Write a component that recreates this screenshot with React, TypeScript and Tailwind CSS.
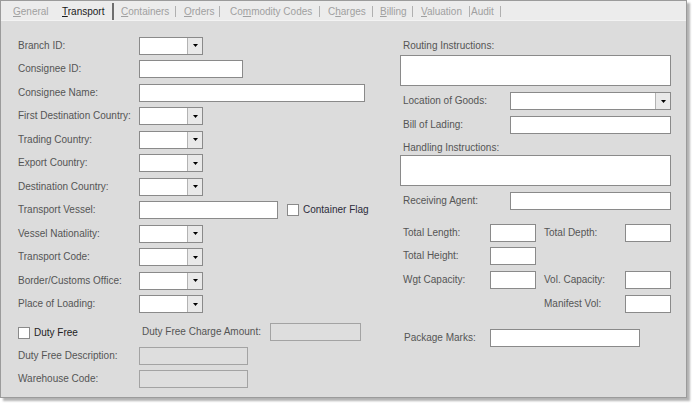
import React from "react";

function Box({ className = "", disabled = false }: { className?: string; disabled?: boolean }) {
  return (
    <div
      className={`h-[18px] border ${
        disabled ? "border-[#a3a3a3] bg-[#dedede]" : "border-[#8a8a8a] bg-white"
      } ${className}`}
    />
  );
}

function Combo({ className = "" }: { className?: string }) {
  return (
    <div className={`flex h-[18px] border border-[#8a8a8a] bg-white ${className}`}>
      <div className="flex-1" />
      <div className="flex w-[15px] items-center justify-center border-l border-[#b3b3b3] bg-[#e9e9e9]">
        <svg width="5" height="3" viewBox="0 0 5 3">
          <path d="M0 0H5L2.5 3Z" fill="#000" />
        </svg>
      </div>
    </div>
  );
}

function Check() {
  return <div className="h-[12px] w-[12px] border border-[#8a8a8a] bg-white" />;
}

function Row({ label, children }: { label: string; children: React.ReactNode }) {
  return (
    <div className="flex h-[23.5px] items-center">
      <div className="w-[121px] text-[#555]">{label}</div>
      {children}
    </div>
  );
}

function Sep() {
  return <span className="h-[11px] w-px bg-[#b0b0b0]" />;
}

function TabStrip() {
  const inactive = "text-[#a0a0a0]";
  return (
    <div className="flex h-[20px] items-center border-b border-[#f3f3f3] bg-[#ececec] pt-[2px]">
      <div className={`w-[55px] pl-[12px] ${inactive}`}>
        <span className="underline">G</span>eneral
      </div>
      <div className="w-[56px] pl-[6px] text-[#1a1a1a]">
        <span className="underline">T</span>ransport
      </div>
      <span className="h-[17px] w-[2px] self-end bg-[#6e6e6e]" />
      <div className={`w-[61px] pl-[7px] ${inactive}`}>
        <span className="underline">C</span>ontainers
      </div>
      <Sep />
      <div className={`w-[43px] pl-[8px] ${inactive}`}>
        <span className="underline">O</span>rders
      </div>
      <Sep />
      <div className={`w-[99px] pl-[10px] ${inactive}`}>
        Co<span className="underline">m</span>modity Codes
      </div>
      <Sep />
      <div className={`w-[52px] pl-[8px] ${inactive}`}>
        C<span className="underline">h</span>arges
      </div>
      <Sep />
      <div className={`w-[39px] pl-[7px] ${inactive}`}>
        <span className="underline">B</span>illing
      </div>
      <Sep />
      <div className={`w-[56px] pl-[8px] ${inactive}`}>
        <span className="underline">V</span>aluation
      </div>
      <Sep />
      <div className={`w-[30px] pl-[1px] ${inactive}`}>Audit</div>
      <Sep />
    </div>
  );
}

function LeftCol() {
  return (
    <div className="flex w-[399px] flex-col pl-[17px] pt-[13px]">
      <Row label="Branch ID:">
        <Combo className="w-[64px]" />
      </Row>
      <Row label="Consignee ID:">
        <Box className="w-[104px]" />
      </Row>
      <Row label="Consignee Name:">
        <Box className="w-[226px]" />
      </Row>
      <Row label="First Destination Country:">
        <Combo className="w-[64px]" />
      </Row>
      <Row label="Trading Country:">
        <Combo className="w-[64px]" />
      </Row>
      <Row label="Export Country:">
        <Combo className="w-[64px]" />
      </Row>
      <Row label="Destination Country:">
        <Combo className="w-[64px]" />
      </Row>
      <Row label="Transport Vessel:">
        <Box className="w-[139px]" />
        <div className="ml-[9px]">
          <Check />
        </div>
        <span className="ml-[4px] text-[#2b2b3a]">Container Flag</span>
      </Row>
      <Row label="Vessel Nationality:">
        <Combo className="w-[64px]" />
      </Row>
      <Row label="Transport Code:">
        <Combo className="w-[64px]" />
      </Row>
      <Row label="Border/Customs Office:">
        <Combo className="w-[64px]" />
      </Row>
      <Row label="Place of Loading:">
        <Combo className="w-[64px]" />
      </Row>

      <div className="mt-[4.5px] flex h-[23.5px] items-center">
        <div className="flex w-[121px] items-center pt-[2px]">
          <Check />
          <span className="ml-[4px] text-[#222]">Duty Free</span>
        </div>
        <div className="w-[131px] pl-[3px] text-[#555]">Duty Free Charge Amount:</div>
        <Box className="w-[91px]" disabled />
      </div>
      <Row label="Duty Free Description:">
        <Box className="w-[109px]" disabled />
      </Row>
      <Row label="Warehouse Code:">
        <Box className="w-[109px]" disabled />
      </Row>
    </div>
  );
}

function RightCol() {
  const lbl = "text-[#555]";
  return (
    <div className="flex w-[271px] flex-col">
      <div className={`mt-[19px] h-[12px] pl-[3px] ${lbl}`}>Routing Instructions:</div>
      <div className="mt-[3px] h-[31px] border border-[#8a8a8a] bg-white" />
      <div className="mt-[6px] flex h-[18px] items-center">
        <div className={`w-[110px] pl-[3px] ${lbl}`}>Location of Goods:</div>
        <Combo className="w-[161px]" />
      </div>
      <div className="mt-[6px] flex h-[18px] items-center">
        <div className={`w-[110px] pl-[3px] ${lbl}`}>Bill of Lading:</div>
        <Box className="w-[161px]" />
      </div>
      <div className={`mt-[8px] h-[12px] pl-[3px] ${lbl}`}>Handling Instructions:</div>
      <div className="mt-[1px] h-[31px] border border-[#8a8a8a] bg-white" />
      <div className="mt-[6px] flex h-[18px] items-center">
        <div className={`w-[110px] pl-[3px] ${lbl}`}>Receiving Agent:</div>
        <Box className="w-[161px]" />
      </div>

      <div className="mt-[14px] grid h-[18px] grid-cols-[90px_46px_89px_46px] items-center">
        <div className={`pl-[3px] ${lbl}`}>Total Length:</div>
        <Box />
        <div className={`pl-[8px] ${lbl}`}>Total Depth:</div>
        <Box />
      </div>
      <div className="mt-[5px] grid h-[18px] grid-cols-[90px_46px_89px_46px] items-center">
        <div className={`pl-[3px] ${lbl}`}>Total Height:</div>
        <Box />
      </div>
      <div className="mt-[6px] grid h-[18px] grid-cols-[90px_46px_89px_46px] items-center">
        <div className={`pl-[3px] ${lbl}`}>Wgt Capacity:</div>
        <Box />
        <div className={`pl-[8px] ${lbl}`}>Vol. Capacity:</div>
        <Box />
      </div>
      <div className="mt-[6px] grid h-[18px] grid-cols-[90px_46px_89px_46px] items-center">
        <div />
        <div />
        <div className={`pl-[8px] ${lbl}`}>Manifest Vol:</div>
        <Box />
      </div>
      <div className="mt-[16px] flex h-[18px] items-center">
        <div className={`w-[90px] pl-[4px] ${lbl}`}>Package Marks:</div>
        <Box className="w-[150px]" />
      </div>
    </div>
  );
}

export default function App() {
  return (
    <div className="h-[407px] w-[693px] bg-white text-[10px] leading-[12px] [font-family:'Liberation_Sans',Arial,sans-serif]">
      <div className="flex h-[398px] w-[687px] flex-col border border-[#9b9b9b] bg-[#dcdcdc] shadow-[3px_3px_2px_rgba(0,0,0,0.3)]">
        <TabStrip />
        <div className="flex">
          <LeftCol />
          <RightCol />
        </div>
      </div>
    </div>
  );
}
